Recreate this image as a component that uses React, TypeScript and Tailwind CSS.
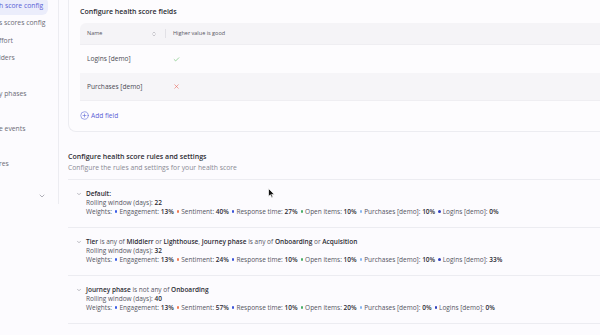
import { ChevronDown, ChevronsUpDown, Check, X, CirclePlus } from 'lucide-react'

const font = { fontFamily: '"Open Sans", "Liberation Sans", sans-serif' }

const sideItems = [
  { label: 'h score config', active: true },
  { label: 's scores config' },
  { label: 'ffort' },
  { label: 'lders' },
  { label: '' },
  { label: 'y phases' },
  { label: '' },
  { label: 'e events' },
  { label: '' },
  { label: 'res' },
]

const dotColors: Record<string, string> = {
  Engagement: 'bg-[#3b5ee6]',
  Sentiment: 'bg-[#ef7b55]',
  'Response time': 'bg-[#3d55d9]',
  'Open items': 'bg-[#4caf6a]',
  'Purchases [demo]': 'bg-[#8ab8f0]',
  'Logins [demo]': 'bg-[#2f3fbf]',
}

type Part = [string, boolean]

const rules: { title: Part[]; days: number; weights: [string, number][] }[] = [
  {
    title: [['Default:', true]],
    days: 22,
    weights: [['Engagement', 13], ['Sentiment', 40], ['Response time', 27], ['Open items', 10], ['Purchases [demo]', 10], ['Logins [demo]', 0]],
  },
  {
    title: [
      ['Tier', true], [' is any of ', false], ['Middlerr', true], [' or ', false], ['Lighthouse', true], [', ', false],
      ['Journey phase', true], [' is any of ', false], ['Onboarding', true], [' or ', false], ['Acquisition', true],
    ],
    days: 32,
    weights: [['Engagement', 13], ['Sentiment', 24], ['Response time', 10], ['Open items', 10], ['Purchases [demo]', 10], ['Logins [demo]', 33]],
  },
  {
    title: [['Journey phase', true], [' is not any of ', false], ['Onboarding', true]],
    days: 40,
    weights: [['Engagement', 13], ['Sentiment', 57], ['Response time', 10], ['Open items', 20], ['Purchases [demo]', 0], ['Logins [demo]', 0]],
  },
  {
    title: [['Tier', true], [' is any of ', false], ['Enterprise', true]],
    days: 30,
    weights: [['Engagement', 20], ['Sentiment', 20], ['Response time', 20], ['Open items', 20], ['Purchases [demo]', 10], ['Logins [demo]', 10]],
  },
]

function Sidebar() {
  return (
    <div className="w-[59px] shrink-0 self-start h-[204px] border-r border-[#ececf1] flex flex-col relative">
      <div className="flex flex-col -mt-[3px]">
        {sideItems.map((it, i) => (
          <div
            key={i}
            className={`h-[17.6px] shrink-0 w-[48px] flex items-center whitespace-nowrap overflow-hidden rounded-r-md text-[6.8px] ${
              it.active ? 'bg-[#ebedfb] text-[#5a62d6]' : 'text-[#6c6c76]'
            }`}
          >
            <span className="-ml-[1px]">{it.label}</span>
          </div>
        ))}
      </div>
      <ChevronDown className="absolute left-[38px] top-[192px] w-[8px] h-[8px] text-[#8a8a94]" strokeWidth={2} />
    </div>
  )
}

function FieldsCard() {
  return (
    <div className="shrink-0 border-l border-b border-[#ececf1] rounded-bl-lg pl-[11px] pt-[7px] h-[132px] bg-[#fdfcfe]">
      <h2 className="text-[7px] font-semibold text-[#2c2c34] leading-[10px]">Configure health score fields</h2>
      <div className="mt-[6px]">
        <div className="h-[22px] bg-[#f5f4f7] flex items-center rounded-tl-md border-b border-[#efeef2] text-[5.5px] text-[#55555f]">
          <div className="w-[86px] pl-[7px] flex items-center justify-between pr-[8px] border-r border-[#e2e1e6] h-[9px]">
            <span>Name</span>
            <ChevronsUpDown className="w-[6px] h-[6px] text-[#9a9aa3]" strokeWidth={2} />
          </div>
          <span className="pl-[7px]">Higher value is good</span>
        </div>
        <div className="h-[28px] flex items-center text-[6.6px] text-[#4a4a54]">
          <span className="w-[86px] pl-[7px]">Logins [demo]</span>
          <Check className="ml-[7px] w-[7px] h-[7px] text-[#5cb85f]" strokeWidth={2} />
        </div>
        <div className="h-[28px] flex items-center bg-[#f6f5f8] border-b border-[#efeef2] text-[6.6px] text-[#4a4a54]">
          <span className="w-[86px] pl-[7px]">Purchases [demo]</span>
          <X className="ml-[7px] w-[7px] h-[7px] text-[#e8665a]" strokeWidth={2} />
        </div>
      </div>
      <div className="mt-[10px] flex items-center gap-[2px] text-[6.6px] text-[#5a62d6]">
        <CirclePlus className="w-[9px] h-[9px]" strokeWidth={1.5} />
        <span>Add field</span>
      </div>
    </div>
  )
}

function Rule({ rule }: { rule: (typeof rules)[number] }) {
  return (
    <div className="shrink-0 border-t border-[#ececf1] pt-[9px] pb-[11px] flex text-[6.5px] leading-[9px] text-[#55555f] whitespace-nowrap">
      <ChevronDown className="ml-[8px] mt-[2px] w-[6px] h-[6px] text-[#7a7a84] shrink-0" strokeWidth={2} />
      <div className="ml-[4px] flex flex-col">
        <div>
          {rule.title.map(([t, b], i) =>
            b ? (
              <span key={i} className="font-semibold text-[#2c2c34]">{t}</span>
            ) : (
              <span key={i}>{t}</span>
            )
          )}
        </div>
        <div>
          Rolling window (days): <span className="font-semibold text-[#2c2c34]">{rule.days}</span>
        </div>
        <div className="flex items-center">
          <span>Weights:</span>
          {rule.weights.map(([name, v]) => (
            <span key={name} className="flex items-center ml-[3px]">
              <span className={`w-[2.5px] h-[2.5px] rounded-full mr-[2px] ${dotColors[name]}`} />
              {name}:&nbsp;<span className="font-semibold text-[#2c2c34]">{v}%</span>
            </span>
          ))}
        </div>
      </div>
    </div>
  )
}

export default function App() {
  return (
    <div style={font} className="w-[600px] h-[335px] overflow-hidden flex bg-[#fcfbfe] relative">
      <Sidebar />
      <div className="flex-1 min-w-0 pl-[9px] flex flex-col">
        <FieldsCard />
        <div className="shrink-0 mt-[20px]">
          <h2 className="text-[7px] font-semibold text-[#2c2c34] leading-[10px]">Configure health score rules and settings</h2>
          <p className="text-[6.8px] text-[#8a8a94] leading-[10px] mt-[1px]">Configure the rules and settings for your health score</p>
        </div>
        <div className="shrink-0 mt-[6px]">
          {rules.map((r, i) => (
            <Rule key={i} rule={r} />
          ))}
        </div>
      </div>
      <svg className="absolute left-[268px] top-[188px]" width="7" height="11" viewBox="0 0 7 11">
        <path d="M0.5 0.5 L0.5 8.5 L2.4 6.8 L3.8 9.8 L5 9.3 L3.7 6.4 L6.3 6.4 Z" fill="#111" stroke="#fff" strokeWidth="0.7" />
      </svg>
    </div>
  )
}
